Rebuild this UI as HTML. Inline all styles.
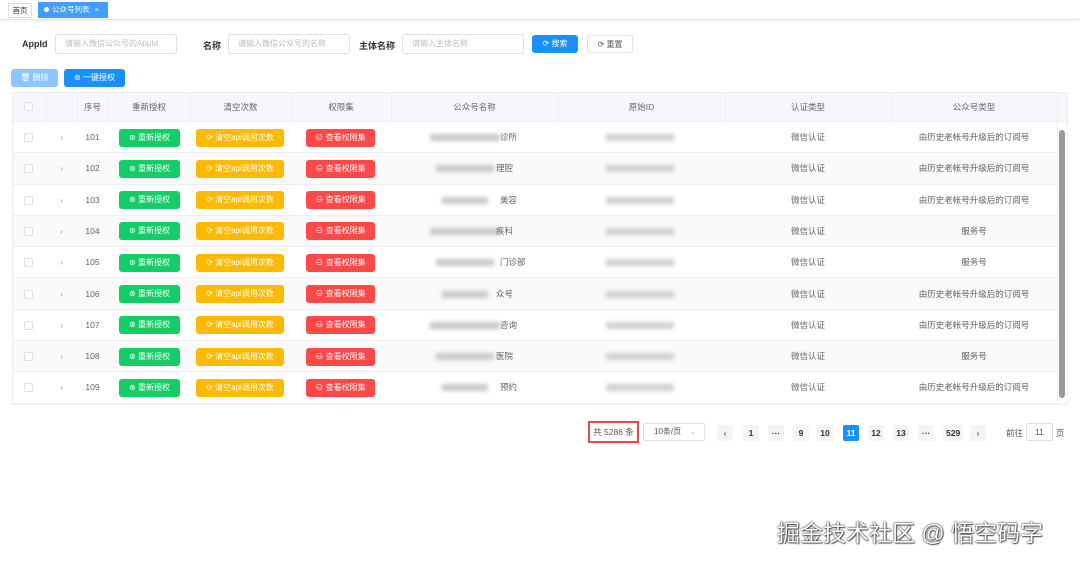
<!DOCTYPE html>
<html><head><meta charset="utf-8"><style>
*{box-sizing:border-box;margin:0;padding:0}
body{width:1080px;height:561px;background:#fff;font-family:"Liberation Sans","Noto Sans CJK SC",sans-serif;font-size:9px;color:#606266;position:relative;overflow:hidden}
.a{position:absolute}
.tabbar{left:0;top:0;width:1080px;height:20px;border-bottom:1px solid #e4e4e4;box-shadow:0 1px 3px rgba(0,0,0,.08)}
.lbl{font-weight:bold;color:#333;font-size:9px}
.inp{border:1px solid #dcdfe6;border-radius:3px;height:20px;color:#bbb;font-size:8px;line-height:18px;padding-left:9px}
.btn{border-radius:3px;height:18px;font-size:8px;line-height:18px;text-align:center;color:#fff}
.cell{position:absolute;text-align:center;line-height:31px;font-size:8.5px;color:#606266}
.hd{position:absolute;text-align:center;line-height:30px;font-size:8.5px;color:#666}
.vl{position:absolute;top:92px;width:1px;height:312px;background:#ebeef5}
.blur{position:absolute;background:#c8c8c8;filter:blur(2px);height:7px}
.pg{position:absolute;top:425px;height:16px;min-width:16px;padding:0 3px;background:#f4f4f5;border-radius:2px;font-size:8.5px;font-weight:bold;line-height:16px;text-align:center;color:#333}
.ck{position:absolute;left:24px;width:9px;height:9px;border:1px solid #dcdfe6;border-radius:2px;background:#fff}
</style></head><body>
<div class="a tabbar"></div>
<div class="a" style="left:8px;top:3px;width:24px;height:15px;border:1px solid #ddd;font-size:7.5px;line-height:13px;text-align:center;color:#333">首页</div>
<div class="a" style="left:38px;top:2px;width:70px;height:16px;background:#409eff;color:#fff;font-size:7.5px;line-height:16px;padding-left:6px"><span style="display:inline-block;width:5px;height:5px;border-radius:50%;background:#fff;margin-right:3px"></span>公众号列表 <span style="margin-left:3px">×</span></div>

<div class="a lbl" style="left:22px;top:39px">AppId</div>
<div class="a inp" style="left:55px;top:34px;width:122px">请输入微信公众号的AppId</div>
<div class="a lbl" style="left:203px;top:39px">名称</div>
<div class="a inp" style="left:228px;top:34px;width:122px">请输入微信公众号的名称</div>
<div class="a lbl" style="left:359px;top:39px">主体名称</div>
<div class="a inp" style="left:402px;top:34px;width:122px">请输入主体名称</div>
<div class="a btn" style="left:532px;top:35px;width:46px;background:#1890ff">⟳ 搜索</div>
<div class="a btn" style="left:587px;top:35px;width:46px;background:#fff;border:1px solid #dcdfe6;color:#555">⟳ 重置</div>

<div class="a btn" style="left:11px;top:69px;width:47px;background:#8cc5ff">🗑 删除</div>
<div class="a btn" style="left:64px;top:69px;width:61px;background:#1890ff">⊛ 一键授权</div>

<div class="a" style="left:12px;top:92px;width:1056px;height:30px;background:#f5f7fa;border-bottom:1px solid #ebeef5"></div>
<div class="a" style="left:12px;top:92px;width:1056px;height:313px;border:1px solid #ebeef5"></div>
<div class="ck" style="top:102px"></div>
<div class="hd" style="left:77px;width:31px;top:92px">序号</div>
<div class="hd" style="left:108px;width:82px;top:92px">重新授权</div>
<div class="hd" style="left:190px;width:101px;top:92px">清空次数</div>
<div class="hd" style="left:291px;width:100px;top:92px">权限集</div>
<div class="hd" style="left:391px;width:167px;top:92px">公众号名称</div>
<div class="hd" style="left:558px;width:167px;top:92px">原始ID</div>
<div class="hd" style="left:725px;width:166px;top:92px">认证类型</div>
<div class="hd" style="left:891px;width:166px;top:92px">公众号类型</div>
<div class="vl" style="left:46px"></div><div class="vl" style="left:77px"></div><div class="vl" style="left:108px"></div><div class="vl" style="left:190px"></div><div class="vl" style="left:291px"></div><div class="vl" style="left:391px"></div><div class="vl" style="left:558px"></div><div class="vl" style="left:725px"></div><div class="vl" style="left:891px"></div><div class="vl" style="left:1057px"></div>
<div class="a" style="left:1059px;top:130px;width:6px;height:268px;background:#9a9a9a;border-radius:3px"></div>

<div id="rows"></div>
<script>
var names=["诊所","理腔","美容","疾科","门诊部","众号","咨询","医院","预约"];
var types=[1,1,1,0,0,1,1,0,1];
var h="";
for(var i=0;i<9;i++){
 var t=122+i*31.3;
 h+='<div class="a" style="left:13px;top:'+t+'px;width:1044px;height:31.3px;border-bottom:1px solid #ebeef5;background:'+(i%2?'#fafafa':'#fff')+'"></div>';
 h+='<div class="ck" style="top:'+(t+11)+'px"></div>';
 h+='<div class="cell" style="left:46px;width:31px;top:'+t+'px;color:#999">›</div>';
 h+='<div class="cell" style="left:77px;width:31px;top:'+t+'px">'+(101+i)+'</div>';
 h+='<div class="a btn" style="left:119px;top:'+(t+6.5)+'px;width:61px;background:#13ce66">⊛ 重新授权</div>';
 h+='<div class="a btn" style="left:196px;top:'+(t+6.5)+'px;width:88px;background:#ffba00">⟳ 清空api调用次数</div>';
 h+='<div class="a btn" style="left:306px;top:'+(t+6.5)+'px;width:69px;background:#ff4949">⊖ 查看权限集</div>';
 h+='<div class="blur" style="left:'+(430+(i%3)*6)+'px;top:'+(t+12)+'px;width:'+(70-(i%3)*12)+'px"></div>';
 h+='<div class="cell" style="left:'+(500+(i%2)*-4)+'px;width:30px;top:'+t+'px;text-align:left">'+names[i]+'</div>';
 h+='<div class="blur" style="left:606px;top:'+(t+12)+'px;width:68px;background:#d0d0d0"></div>';
 h+='<div class="cell" style="left:725px;width:166px;top:'+t+'px">微信认证</div>';
 h+='<div class="cell" style="left:891px;width:166px;top:'+t+'px">'+(types[i]?'由历史老帐号升级后的订阅号':'服务号')+'</div>';
}
document.getElementById('rows').innerHTML=h;
</script>

<div class="a" style="left:588px;top:421px;width:51px;height:22px;border:2px solid #e94b4b;font-size:8.5px;line-height:18px;text-align:center;color:#555">共 5286 条</div>
<div class="a" style="left:643px;top:423px;width:62px;height:18px;border:1px solid #dcdfe6;border-radius:2px;font-size:8px;line-height:16px;padding-left:10px;color:#555">10条/页 <span style="color:#bbb;margin-left:6px">⌄</span></div>
<div class="pg" style="left:717px;font-weight:normal">‹</div>
<div class="pg" style="left:743px">1</div>
<div class="pg" style="left:768px">···</div>
<div class="pg" style="left:793px">9</div>
<div class="pg" style="left:817px">10</div>
<div class="pg" style="left:843px;background:#1890ff;color:#fff">11</div>
<div class="pg" style="left:868px">12</div>
<div class="pg" style="left:893px">13</div>
<div class="pg" style="left:918px">···</div>
<div class="pg" style="left:943px">529</div>
<div class="pg" style="left:970px;font-weight:normal">›</div>
<div class="a" style="left:1006px;top:427px;font-size:8.5px;color:#555">前往</div>
<div class="a" style="left:1026px;top:423px;width:27px;height:18px;border:1px solid #dcdfe6;border-radius:2px;font-size:8.5px;line-height:16px;text-align:center;color:#555">11</div>
<div class="a" style="left:1056px;top:427px;font-size:8.5px;color:#555">页</div>

<div class="a" style="left:777px;top:514px;font-size:23px;color:#fff;text-shadow:0 0 2px rgba(0,0,0,.8),0 0 1px rgba(0,0,0,.8),1px 1px 1px rgba(0,0,0,.5);white-space:nowrap">掘金技术社区 @ 悟空码字</div>
</body></html>
